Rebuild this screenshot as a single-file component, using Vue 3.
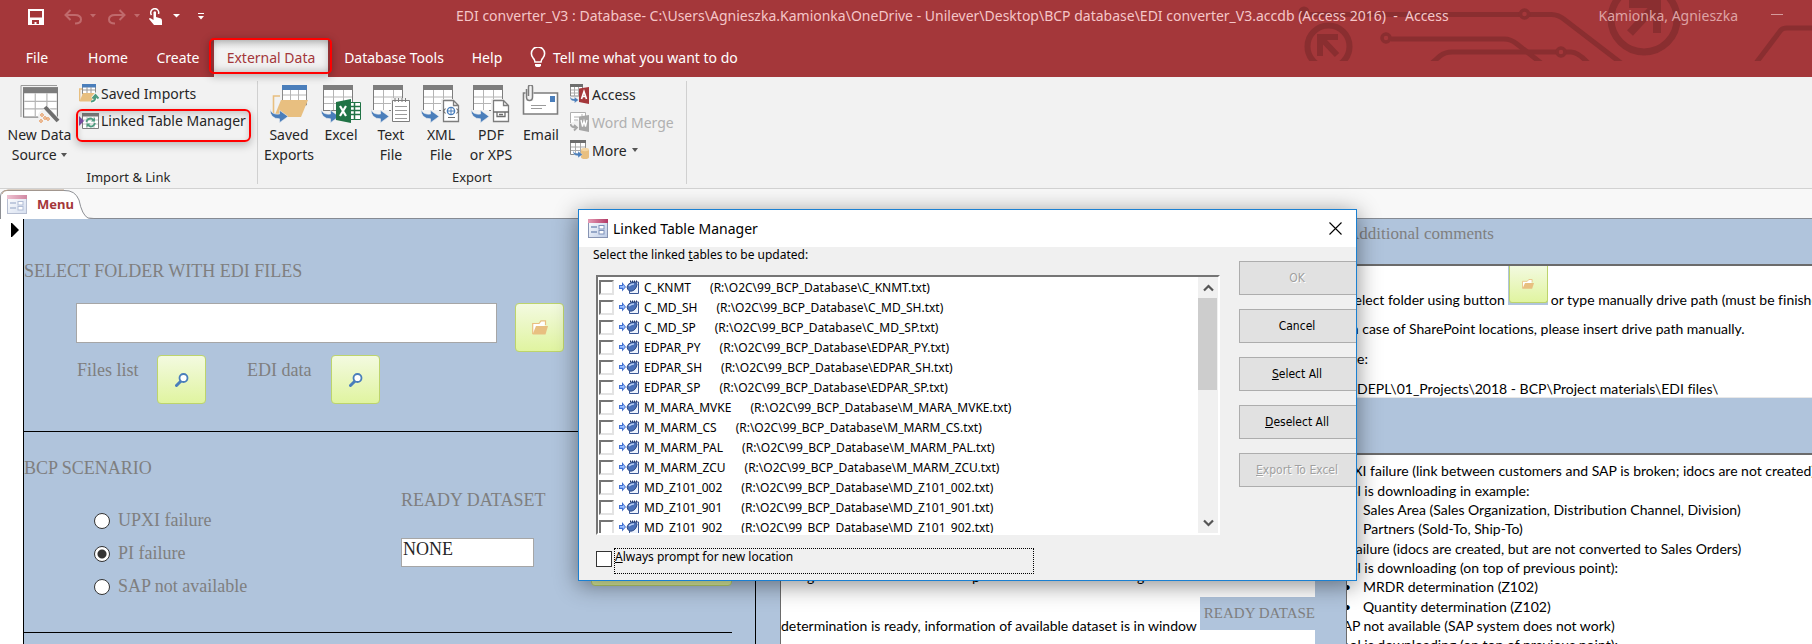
<script setup>
import { ref } from 'vue'

const ribbonTabs = [
  { label: 'Home', cls: 'w-home' },
  { label: 'Create', cls: 'w-create' },
  { label: 'External Data', cls: 'active' },
  { label: 'Database Tools', cls: 'w-tools' },
  { label: 'Help', cls: 'w-help' },
]

const exportButtons = [
  { icon: 'saved', lines: ['Saved', 'Exports'], wide: true },
  { icon: 'excel', lines: ['Excel'] },
  { icon: 'text', lines: ['Text', 'File'] },
  { icon: 'xml', lines: ['XML', 'File'] },
  { icon: 'pdf', lines: ['PDF', 'or XPS'] },
  { icon: 'email', lines: ['Email'] },
]

const tables = ref(
  [
    'C_KNMT', 'C_MD_SH', 'C_MD_SP', 'EDPAR_PY', 'EDPAR_SH', 'EDPAR_SP', 'M_MARA_MVKE',
    'M_MARM_CS', 'M_MARM_PAL', 'M_MARM_ZCU', 'MD_Z101_002', 'MD_Z101_901', 'MD_Z101_902',
  ].map((name) => ({ name, checked: false }))
)

const scenarios = ['UPXI failure', 'PI failure', 'SAP not available']
const scenario = ref('PI failure')
const folder = ref('')
const dataset = ref('NONE')
const alwaysPrompt = ref(false)

const notes = [
  { text: 'UPXI failure (link between customers and SAP is broken; idocs are not created)' },
  { text: 'Tool is downloading in example:' },
  { text: 'Sales Area (Sales Organization, Distribution Channel, Division)', item: true },
  { text: 'Partners (Sold-To, Ship-To)', item: true },
  { text: 'PI failure (idocs are created, but are not converted to Sales Orders)' },
  { text: 'Tool is downloading (on top of previous point):' },
  { text: 'MRDR determination (Z102)', item: true },
  { text: 'Quantity determination (Z102)', item: true },
  { text: 'SAP not available (SAP system does not work)' },
  { text: 'Tool is downloading (on top of previous point):' },
]
</script>

<template>
  <div class="app">
    <svg class="defs" aria-hidden="true">
      <symbol id="grid" viewBox="0 0 30 26">
        <rect x="0.5" y="0.5" width="29" height="25" fill="#fff" stroke="#7d7d7d" />
        <path d="M0 0H30V5H0Z" fill="#7d7d7d" />
        <path d="M10.500 5V25M20.500 5V25M1 12H29M1 18.500H29" stroke="#b5b5b5" fill="none" />
      </symbol>
      <symbol id="swoosh" viewBox="0 0 20 15">
        <path d="M0 1Q2 7 10 6V2L19 8.500L10 15V11Q0 11 0 1Z" fill="#4a7ebb" stroke="#f2f2f2" stroke-width="0.6" />
      </symbol>
      <symbol id="folder" viewBox="0 0 16 15">
        <path d="M0.700 14V3.500H7L9 0.800H13.500V5" fill="#fff" stroke="#e8bf80" stroke-width="1.200" />
        <path d="M4 6H16L13.500 14.500H0.500Z" fill="#e8bf80" />
      </symbol>
      <symbol id="lens" viewBox="0 0 14 14">
        <path d="M6 8L1.500 12.500" stroke="#4a7ebb" stroke-width="3" stroke-linecap="round" />
        <circle cx="8.500" cy="5" r="4" fill="#fff" stroke="#4a7ebb" stroke-width="1.800" />
      </symbol>
      <symbol id="form" viewBox="0 0 20 19">
        <linearGradient id="fbg" x1="0" y1="0" x2="1" y2="1">
          <stop offset="0" stop-color="#fff" /><stop offset="1" stop-color="#bccbe6" />
        </linearGradient>
        <linearGradient id="fhd" x1="0" y1="0" x2="1" y2="0">
          <stop offset="0" stop-color="#e59ab4" /><stop offset="1" stop-color="#b23a66" />
        </linearGradient>
        <rect x="0.500" y="0.500" width="19" height="18" fill="url(#fbg)" stroke="#8794b3" />
        <rect width="20" height="4" fill="url(#fhd)" />
        <path d="M3 8H9M3 13H9" stroke="#7e92bb" stroke-width="1.300" />
        <rect x="11" y="6.500" width="5" height="3.500" fill="#fff" stroke="#7e92bb" />
        <rect x="11" y="11.500" width="5" height="3.500" fill="#fff" stroke="#7e92bb" />
      </symbol>
      <symbol id="linked" viewBox="0 0 20 14">
        <path d="M0 5H3V2L7 7L3 11.500V9H0Z" fill="#3f6fd0" />
        <path d="M1 6H4V4.500L6 7L4 9V7.800H1Z" fill="#9dc0ff" />
        <path d="M12 2H19.500V13.500H10.500V10" fill="#eef3fc" stroke="#3a5795" />
        <path d="M11 1.500H18" stroke="#22376b" stroke-width="2" stroke-dasharray="1 1" />
        <path d="M8 7Q9 3 13 2.500Q18 2 18 4.500Q17 10 13 11Q9 12 8 7Z" fill="#4a70b8" stroke="#2b4784" />
        <path d="M10 6Q12 3.800 15 4" stroke="#b5cdf4" stroke-width="1.500" fill="none" />
      </symbol>
    </svg>

    <header class="banner">
      <svg class="circuit" width="552" height="61" viewBox="0 0 552 61" fill="none" stroke="#8a2e30" stroke-width="5" aria-hidden="true">
        <circle cx="44" cy="12" r="3" fill="#8a2e30" />
        <path d="M48 14.500H260M269 14.500H290Q298 14 305 20L361 63" />
        <circle cx="264.500" cy="14" r="4" stroke-width="3.500" />
        <circle cx="68.500" cy="46.500" r="21" stroke-width="6" />
        <path d="M60 56V37H78M61 38L77 55" stroke-width="6" />
        <circle cx="126" cy="38" r="4" stroke-width="3.500" />
        <path d="M131 39H244Q251 39 257 44L281 63" />
        <path d="M172 63L180 56Q185 52 192 52H296M306 52H311Q318 52 328 63" />
        <circle cx="301" cy="52" r="4" stroke-width="3.500" />
        <circle cx="384" cy="19" r="33" stroke-width="7" />
        <path d="M369 4H397V33M395 6L370 33" stroke-width="8" />
        <path d="M496 63L521 30Q523 28 527 28H552" />
      </svg>

      <div class="title-row">
        <div class="quick">
          <button class="qb save" aria-label="Save">
            <svg width="16" height="16" viewBox="0 0 16 16"><path d="M0 0H16V16H0Z" fill="#fff" /><path d="M2 2H14V8.500H2Z" fill="#a4373a" /><path d="M4 11H11V15H8.500V13H6.500V15H4Z" fill="#a4373a" /></svg>
          </button>
          <button class="qb undo" aria-label="Undo">
            <svg width="33" height="16" viewBox="0 0 33 16" fill="none" stroke="#c06a6c" stroke-width="2"><path d="M1.500 6H11Q17 6 17 10.500Q17 14.500 11 14.500M6.500 1L1.500 6L6.500 11" /><path d="M26 5H32L29 8.500Z" fill="#c06a6c" stroke="none" /></svg>
          </button>
          <button class="qb redo" aria-label="Redo">
            <svg width="33" height="16" viewBox="0 0 33 16" fill="none" stroke="#c06a6c" stroke-width="2"><path d="M16.500 6H7Q1 6 1 10.500Q1 14.500 7 14.500M11.500 1L16.500 6L11.500 11" /><path d="M26 5H32L29 8.500Z" fill="#c06a6c" stroke="none" /></svg>
          </button>
          <button class="qb touch" aria-label="Touch or mouse mode">
            <svg width="31" height="18" viewBox="0 0 31 18" fill="none"><path d="M2.500 7A4 4 0 1 1 9.500 6" stroke="#fff" stroke-width="1.500" /><path d="M4.500 4Q6 2.500 7 4V9L12 10.500Q13 11 13 13V17H5L0 11Q0.500 9.500 2 10.500L4.500 12Z" fill="#fff" /><path d="M24 6H31L27.500 9.500Z" fill="#fff" /></svg>
          </button>
          <button class="qb more" aria-label="Customize Quick Access Toolbar">
            <svg width="6" height="8" viewBox="0 0 6 8"><path d="M0 0.500H6" stroke="#fff" /><path d="M0 3H6L3 6.500Z" fill="#fff" /></svg>
          </button>
        </div>
        <h1 class="title">EDI converter_V3 : Database- C:\Users\Agnieszka.Kamionka\OneDrive - Unilever\Desktop\BCP database\EDI converter_V3.accdb (Access 2016) &nbsp;-&nbsp; Access</h1>
        <span class="user">Kamionka, Agnieszka</span>
        <button class="qb minimize" aria-label="Minimize"><svg width="12" height="2"><path d="M0 0.500H12" stroke="#d59a9b" /></svg></button>
      </div>

      <nav class="tabs">
        <button class="tab w-file">File</button>
        <button v-for="t in ribbonTabs" :key="t.label" class="tab" :class="t.cls">{{ t.label }}</button>
        <button class="tab tell">
          <svg width="16" height="21" viewBox="0 0 16 21" fill="none" stroke="#fff" stroke-width="1.600"><path d="M5 15Q5 12.500 3 10.800A6.600 6.600 0 1 1 13 10.800Q11 12.500 11 15Z" /><path d="M5 17H11V19L9.500 20H6.500L5 19Z" fill="#fff" stroke="none" /></svg>
          Tell me what you want to do
        </button>
      </nav>
    </header>

    <section class="ribbon" aria-label="External Data">
      <div class="group import">
        <div class="tools">
          <button class="big source">
            <svg width="40" height="39" viewBox="0 0 40 39">
              <path d="M1 32V0.500H37" stroke="#9a9a9a" fill="none" />
              <use href="#grid" x="3" y="2" width="35" height="31" />
              <path d="M25 23L37 36" stroke="#f2f2f2" stroke-width="7" />
              <circle cx="24" cy="31" r="6" fill="#f2f2f2" /><path d="M25 22L38 36" stroke="#6e6e6e" stroke-width="4" />
              <g fill="none" stroke="#e8914f"><circle cx="22" cy="30" r="1.300" /><circle cx="21" cy="36" r="1.300" /><circle cx="28" cy="34" r="1.300" /><circle cx="25" cy="33" r="1.300" /></g>
            </svg>
            <span>New Data</span><span>Source <i class="caret"></i></span>
          </button>
          <div class="stack">
            <button class="small">
              <svg width="20" height="19" viewBox="0 0 20 19"><path d="M0.700 17V5H4" fill="none" stroke="#e8bf80" stroke-width="1.400" /><path d="M3.500 0.500H16.500V10H3.500Z" fill="#fff" stroke="#8a8a8a" /><path d="M3 0H17V3.500H3Z" fill="#4a7ebb" /><path d="M8 3V9M12 3V9M4 6H16" stroke="#9a9a9a" /><path d="M4 9H17L12 17.500H0.500Z" fill="#e8bf80" /><path d="M12 18Q17 18 16.500 12M13.500 14.500L16.500 11L19.500 14.500" fill="none" stroke="#fff" stroke-width="3.500" /><path d="M12 17.500Q16.500 17.500 16.500 12M13.500 14.500L16.500 11L19.500 14.500" fill="none" stroke="#4e9b7f" stroke-width="2" /></svg>
              Saved Imports
            </button>
            <button class="small marked">
              <svg width="20" height="16" viewBox="0 0 20 16"><path d="M3.500 0.500H19.500V15.500H3.500Z" fill="#fff" stroke="#7d7d7d" /><path d="M3 0H20V3.500H3Z" fill="#7d7d7d" /><path d="M4 7H19M4 11H19M8 4V15M15 4V15" stroke="#c4c4c4" /><path d="M7.500 9Q8 5.500 12 5.500L15 7M16 10Q15 13.500 11.500 13.500L8.500 12" fill="none" stroke="#4e9b7f" stroke-width="1.800" /><path d="M16 4.500V8.500H12ZM7.500 14.500V10.500H11.500Z" fill="#4e9b7f" /><path d="M0 3L5 8L0 13Z" fill="#7a4da3" /></svg>
              Linked Table Manager
            </button>
          </div>
        </div>
        <div class="caption">Import &amp; Link</div>
      </div>

      <div class="group export">
        <div class="tools">
          <button v-for="b in exportButtons" :key="b.icon" class="big" :class="{ wide: b.wide }">
            <svg width="40" height="39" viewBox="0 0 40 39">
              <template v-if="b.icon === 'saved'">
                <path d="M4.500 30V11H11" fill="none" stroke="#e8bf80" stroke-width="1.600" />
                <path d="M13.500 0.500H37.500V20H13.500Z" fill="#fff" stroke="#8a8a8a" /><path d="M13 0H38V5H13Z" fill="#4a7ebb" /><path d="M21.500 5V16M29.500 5V16M14 10H37" stroke="#b5b5b5" />
                <path d="M12 15H39L32 32H5Z" fill="#e8bf80" />
                <use href="#swoosh" x="1" y="23" width="19" height="15" />
              </template>
              <template v-else-if="b.icon === 'email'">
                <path d="M2.500 8H36.500V29H2.500Z" fill="#fff" stroke="#7d7d7d" stroke-width="1.600" /><path d="M29 11H34V17H29Z" fill="#4a7ebb" /><path d="M10 20.500H25M10 23.500H21" stroke="#9a9a9a" /><path d="M4.500 4V16H12.500V4Z" fill="#f2f2f2" /><path d="M5.500 4V12A3 3.500 0 0 0 11.500 12V2A2 2 0 0 0 7.500 2V11" fill="none" stroke="#7d7d7d" stroke-width="1.500" />
              </template>
              <template v-else>
                <use href="#grid" x="2" y="0" width="30" height="26" />
                <path v-if="b.icon !== 'excel'" d="M18 25H1V27H18Z" fill="#f2f2f2" />
                <use href="#swoosh" x="0" y="23" width="19" height="15" />
                <g v-if="b.icon === 'excel'">
                  <path d="M28 17.500H39.500V34.500H28Z" fill="#fff" stroke="#217346" /><path d="M29 21.500H39M29 25.500H39M29 29.500H39M33.500 18V34" stroke="#217346" stroke-width="1.500" /><path d="M15 17L30 14V38L15 35Z" fill="#217346" /><path d="M19 21L25 31M25 21L19 31" stroke="#fff" stroke-width="2.200" />
                </g>
                <g v-else-if="b.icon === 'text'">
                  <path d="M20 13H39V38H20Z" fill="#f2f2f2" /><path d="M21.500 15.500H38.500V36.500H21.500Z" fill="#fff" stroke="#7d7d7d" /><path d="M24 13V17M27.500 13V17M31 13V17M34.500 13V17" stroke="#7d7d7d" /><path d="M24 21.500H36M24 25.500H36M24 29.500H36M24 33.500H36" stroke="#9a9a9a" />
                </g>
                <g v-else>
                  <path d="M20 14H40V38H20Z" fill="#f2f2f2" /><path d="M22.500 15.500H32.500L37.500 20.500V36.500H22.500ZM32.500 15.500V20.500H37.500" fill="#fff" stroke="#7d7d7d" stroke-width="1.300" />
                  <template v-if="b.icon === 'xml'"><circle cx="30" cy="26" r="3.600" fill="#fff" stroke="#4a7ebb" stroke-width="1.400" /><path d="M30 22V30M26.500 26H33.500" stroke="#4a7ebb" /><path d="M24.500 23.500L22.500 26L24.500 28.500M35.500 23.500L37.500 26L35.500 28.500M27 32.500H34" fill="none" stroke="#6e6e6e" stroke-width="1.200" /></template>
                  <path v-else d="M22 27H26V31.500H34V27H38M26 29V27H34V29M28 29.500H32" fill="none" stroke="#6e6e6e" stroke-width="1.300" />
                </g>
              </template>
            </svg>
            <span v-for="l in b.lines" :key="l">{{ l }}</span>
          </button>
          <div class="stack right">
            <button class="small">
              <svg width="20" height="20" viewBox="0 0 20 20"><path d="M0.500 0.500H12.500V12H0.500Z" fill="#fff" stroke="#8a8a8a" /><path d="M0 0H13V3H0Z" fill="#6e6e6e" /><path d="M4.500 3V12M8.500 3V12M1 6H12M1 9H12" stroke="#aaa" /><path d="M9 4.500L19 3V20L9 18Z" fill="#a4373a" /><path d="M11.500 15L14 7.500L16.500 15M12.500 12.500H15.500" fill="none" stroke="#fff" stroke-width="1.600" /><use href="#swoosh" x="0" y="12" width="9" height="7" /></svg>
              Access
            </button>
            <button class="small" disabled>
              <svg width="20" height="20" viewBox="0 0 20 20"><path d="M0.500 11V0.500H15.500V5" fill="#fff" stroke="#b0b0b0" /><path d="M4 5H9M4 8H8M11 3H13" stroke="#b0b0b0" /><path d="M9 4.500L19 3V20L9 18Z" fill="#a6a6a6" /><path d="M11 8L12.500 14.500L14 9L15.500 14.500L17 8" fill="none" stroke="#fff" stroke-width="1.300" /><path d="M0.500 12Q1 15.500 6 15.500M4 13L7 15.500L4 18.500" fill="none" stroke="#a6a6a6" stroke-width="1.800" /></svg>
              Word Merge
            </button>
            <button class="small">
              <svg width="20" height="20" viewBox="0 0 20 20"><path d="M0.500 0.500H15.500V14.500H0.500Z" fill="#fff" stroke="#8a8a8a" /><path d="M0 0H16V3H0Z" fill="#6e6e6e" /><path d="M5.500 3V14M10.500 3V14M1 7H15M1 10.500H15" stroke="#aaa" /><path d="M11 10H19V17Q19 19 15 19Q11 19 11 17Z" fill="#e8bf80" /><ellipse cx="15" cy="9.500" rx="4" ry="1.700" fill="#f3d6a5" /><use href="#swoosh" x="3" y="10" width="10" height="8" /></svg>
              More <i class="caret"></i>
            </button>
          </div>
        </div>
        <div class="caption">Export</div>
      </div>
    </section>

    <div class="doc-tabs">
      <svg class="tab-shape" width="94" height="30" viewBox="0 0 94 30" aria-hidden="true"><path d="M0.500 30V7Q1 1.500 7 1.500H64Q75 1 79 11Q82 26 88 29Q90 30 94 30Z" fill="#fff" /><path d="M0.500 30V7Q1 1.500 7 1.500H64Q75 1 79 11Q82 26 88 29L94 29.500" fill="none" stroke="#8d8f94" /><path d="M2 5Q3 1 8 1H64" fill="none" stroke="#b8a08a" /></svg>
      <button class="doc-tab"><svg class="faded" width="20" height="19"><use href="#form" /></svg>Menu</button>
    </div>

    <main class="form">
      <div class="selector"><svg width="8" height="14" viewBox="0 0 8 14"><path d="M0 0H1L8 7L1 14H0Z" fill="#000" /></svg></div>

      <div class="left">
        <section class="block folder-block">
          <h2><label for="folder">SELECT FOLDER WITH EDI FILES</label></h2>
          <div class="folder-row">
            <input id="folder" v-model="folder" type="text" />
            <button class="lime" aria-label="Choose folder"><svg width="16" height="15"><use href="#folder" /></svg></button>
          </div>
          <div class="lookup-row">
            <span>Files list</span>
            <button class="lime" aria-label="Show files list"><svg width="14" height="14"><use href="#lens" /></svg></button>
            <span>EDI data</span>
            <button class="lime" aria-label="Show EDI data"><svg width="14" height="14"><use href="#lens" /></svg></button>
          </div>
        </section>

        <section class="block scenario-block">
          <h2>BCP SCENARIO</h2>
          <div class="scenario-row">
            <div class="radios">
              <label v-for="s in scenarios" :key="s"><input v-model="scenario" type="radio" name="scenario" :value="s" />{{ s }}</label>
            </div>
            <div class="ready">
              <label for="dataset">READY DATASET</label>
              <input id="dataset" v-model="dataset" type="text" />
            </div>
            <button class="lime run" aria-label="Run"></button>
          </div>
        </section>
      </div>

      <div class="middle">
        <p class="tails"><span>g</span><span>p</span><span>g</span></p>
        <p class="info">determination is ready, information of available dataset is in window <span class="chip">READY DATASET</span></p>
      </div>

      <div class="side">
        <h3>Additional comments</h3>
        <div class="panel steps">
          <p class="first">Select folder using button <span class="thumb"><span class="lime mini"><svg width="12" height="10" viewBox="0 0 16 15" preserveAspectRatio="none"><use href="#folder" width="16" height="15" /></svg></span></span> or type manually drive path (must be finished</p>
          <p>In case of SharePoint locations, please insert drive path manually.</p>
          <p class="in">e:</p>
          <p class="in">DEPL\01_Projects\2018 - BCP\Project materials\EDI files\</p>
        </div>
        <div class="panel notes">
          <p v-for="(n, i) in notes" :key="i" :class="{ item: n.item }">{{ n.text }}</p>
        </div>
      </div>
    </main>

    <div class="dialog" role="dialog" aria-labelledby="dlg-title">
      <div class="dlg-bar">
        <svg width="20" height="19"><use href="#form" /></svg>
        <h2 id="dlg-title">Linked Table Manager</h2>
        <button class="close" aria-label="Close"><svg width="13" height="13" viewBox="0 0 13 13"><path d="M0.500 0.500L12.500 12.500M12.500 0.500L0.500 12.500" stroke="#000" stroke-width="1.100" /></svg></button>
      </div>
      <div class="dlg-body">
        <div class="dlg-main">
          <p class="prompt">Select the linked <u>t</u>ables to be updated:</p>
          <div class="list">
            <div class="rows">
              <label v-for="t in tables" :key="t.name" class="row">
                <input v-model="t.checked" type="checkbox" />
                <svg width="20" height="14"><use href="#linked" /></svg>
                <span>{{ t.name }}</span><span class="path">(R:\O2C\99_BCP_Database\{{ t.name }}.txt)</span>
              </label>
            </div>
            <div class="scroll">
              <button aria-label="Scroll up"><svg width="11" height="8" viewBox="0 0 11 8"><path d="M1 6.500L5.500 2L10 6.500" fill="none" stroke="#555" stroke-width="2.200" /></svg></button>
              <div class="grip"></div>
              <button aria-label="Scroll down"><svg width="11" height="8" viewBox="0 0 11 8"><path d="M1 1.500L5.500 6L10 1.500" fill="none" stroke="#555" stroke-width="2.200" /></svg></button>
            </div>
          </div>
          <label class="always"><input v-model="alwaysPrompt" type="checkbox" /><span><u>A</u>lways prompt for new location</span></label>
        </div>
        <div class="dlg-buttons">
          <button disabled>OK</button>
          <button>Cancel</button>
          <button><span><u>S</u>elect All</span></button>
          <button><span><u>D</u>eselect All</span></button>
          <button disabled><span><u>E</u>xport To Excel</span></button>
        </div>
      </div>
    </div>
  </div>
</template>

<style>
body { overflow: hidden; }
</style>

<style scoped>
.app { position: relative; display: flex; flex-direction: column; height: 100vh; overflow: hidden; background: #fff; font-family: "Noto Sans", "Open Sans", sans-serif; font-size: 14px; color: #262626; }
.app * { box-sizing: border-box; }
button { margin: 0; padding: 0; border: 0; background: none; font: inherit; color: inherit; white-space: nowrap; }
h1, h2, h3, p { margin: 0; font-weight: normal; font-size: inherit; }
svg { display: block; flex: none; }
.defs { position: absolute; width: 0; height: 0; }

/* title bar and ribbon tabs */
.banner { position: relative; flex: none; height: 77px; background: #a4373a; color: #fff; }
.circuit { position: absolute; top: 0; right: 0; }
.title-row { position: relative; display: flex; align-items: center; height: 30px; padding-right: 29px; }
.quick { display: flex; align-items: center; width: 456px; padding: 4px 0 0 28px; }
.undo { margin-left: 20px; }
.redo { margin-left: 11px; }
.touch { margin-left: 8px; }
.more { margin-left: 18px; }
.title { color: #f5c6c8; white-space: nowrap; }
.user { margin-left: auto; color: #dea3a5; white-space: nowrap; }
.minimize { margin-left: 33px; }
.tabs { position: relative; display: flex; height: 47px; padding: 9px 0 0 12px; }
.tab { display: flex; justify-content: center; align-items: center; height: 38px; padding-bottom: 2px; }
.w-file { width: 50px; }
.w-home { width: 92px; }
.w-create { width: 48px; margin-right: 12px; }
.active { width: 114px; background: linear-gradient(#d8d8d8, #f2f2f2 10px); color: #a4373a; position: relative; }
.active::after { content: ""; position: absolute; left: -5px; right: -4px; top: -1px; height: 32px; border: 2px solid #f00; border-radius: 5px; box-shadow: 0 2px 8px rgba(0,0,0,.3), inset 0 0 8px rgba(0,0,0,.3); }
.w-tools { width: 132px; }
.w-help { width: 54px; }
.tell { gap: 7px; margin-left: 16px; }

/* ribbon */
.ribbon { flex: none; display: flex; height: 112px; padding: 4px 0; background: #f2f2f2; border-bottom: 1px solid #d2d2d2; }
.group { height: 103px; display: flex; flex-direction: column; justify-content: space-between; border-right: 1px solid #d0d0d0; }
.import { width: 258px; }
.export { width: 429px; }
.tools { display: flex; }
.caption { text-align: center; font-size: 13px; line-height: 14px; }
.big { display: flex; flex-direction: column; align-items: center; width: 50px; padding-top: 4px; line-height: 20px; }
.big svg { margin-bottom: 1px; }
.source { width: 79px; }
.wide { width: 54px; margin-left: 4px; }
.caret { display: inline-block; margin-left: 1px; border: 3px solid transparent; border-top: 4px solid #555; border-bottom: 0; vertical-align: 3px; }
.stack { display: flex; flex-direction: column; align-items: flex-start; }
.small { display: flex; align-items: center; gap: 2px; height: 28px; padding-bottom: 2px; }
.small .caret { margin-left: 3px; }
.import .small { height: 27px; padding-bottom: 2px; }
.import .marked { position: relative; }
.marked::after { content: ""; position: absolute; left: -3px; right: -5px; top: 1px; height: 29px; border: 2px solid #f00; border-radius: 6px; box-shadow: 0 3px 8px rgba(0,0,0,.25), inset 0 3px 6px rgba(0,0,0,.18); }
.right { padding-left: 4px; }
.small:disabled { color: #b0b0b0; }

/* document tab strip */
.doc-tabs { position: relative; flex: none; height: 30px; background: #f8f8f8; border-bottom: 1px solid #868b93; }
.tab-shape { position: absolute; left: 0; top: 0; }
.doc-tab { position: relative; display: flex; align-items: center; gap: 10px; height: 30px; padding-left: 7px; font-size: 13px; font-weight: bold; color: #a4373a; }
.faded { opacity: .6; }

/* form */
.form { flex: 1; display: flex; min-height: 0; background: #b0c4dc; }
.selector { width: 23px; padding: 4px 0 0 11px; background: #fff; }
.left { width: 733px; border-left: 1px solid #000; border-right: 1px solid #000; font-family: "Liberation Serif", serif; font-size: 18px; line-height: 24px; color: #7f7f7f; }
.block { width: 708px; border-bottom: 1px solid #000; }
.folder-block { padding: 40px 0 27px; }
.folder-row { display: flex; gap: 18px; padding: 20px 0 3px 52px; }
.folder-row input { width: 421px; height: 40px; border: 1px solid #a6a6a6; background: #fff; }
.lime { display: flex; align-items: center; justify-content: center; width: 49px; height: 49px; border: 1px solid #bdd46c; border-radius: 4px; background: linear-gradient(#f3fae0, #e0f4a0); }
.lookup-row { display: flex; padding-left: 53px; }
.lookup-row span { width: 80px; padding-top: 3px; }
.lookup-row span + .lime + span { margin-left: 41px; width: 84px; }
.scenario-block { padding: 24px 0 29px; }
.scenario-row { display: flex; }
.radios { width: 377px; padding: 24px 0 0 70px; }
.radios label { display: flex; align-items: center; gap: 8px; height: 33px; padding-bottom: 2px; }
.radios input { appearance: none; width: 16px; height: 16px; margin: 3px 0 0; border: 1px solid #333; border-radius: 50%; background: #fff; }
.radios input:checked { background: radial-gradient(circle, #333 4px, #fff 5px); }
.ready { display: flex; flex-direction: column; width: 190px; padding-top: 8px; white-space: nowrap; }
.ready input { width: 133px; height: 29px; margin-top: 26px; padding: 0 1px 6px; border: 1px solid #a6a6a6; font: inherit; color: #262626; background: #fff; }
.run { width: 141px; height: 48px; margin-top: 58px; }

.middle, .panel { background: #fff; border-left: 1px solid #6b6b6b; overflow: hidden; font-family: Lato, Carlito, sans-serif; font-size: 14px; line-height: 20px; color: #000; white-space: nowrap; font-variant-ligatures: none; }
.middle { width: 535px; margin-left: 24px; padding-top: 348px; }
.tails { display: flex; gap: 100px; padding-left: 26px; }
.tails span { width: 65px; }
.info { display: flex; align-items: flex-end; gap: 3px; margin-top: 7px; }
.chip { padding: 0 4px; background: #b0c4dc; color: #7f7f7f; font: 15px/33px "Liberation Serif", serif; margin: 3px 0 6px; }
.side { flex: 1; min-width: 0; display: flex; flex-direction: column; margin-left: 31px; }
.side h3 { height: 45px; padding-left: 1px; font: 17px/30px "Liberation Serif", serif; color: #7f7f7f; }
.panel { border-top: 2px solid #6b6b6b; }
.steps { height: 134px; border-bottom: 1px solid #e8e8e8; margin-bottom: 55px; }
.steps p { line-height: 30px; }
.steps .in { padding-left: 10px; }
.steps .first { display: flex; align-items: flex-end; gap: 3px; line-height: 20px; height: 48px; padding-bottom: 4px; }
.thumb { align-self: flex-start; padding: 0 0 2px 1px; background: #b0c4dc; }
.mini { width: 39px; height: 37px; border-top: 0; border-radius: 0 0 3px 3px; }
.notes { flex: 1; min-height: 0; padding-top: 6px; }
.notes p { line-height: 19px; margin-left: -12px; }
.notes p:nth-child(3n+1) { padding-bottom: 1px; }
.notes .item { padding-left: 28px; }
.notes .item::before { content: "•"; float: left; margin-left: -20px; }

/* dialog window */
.dialog { position: absolute; left: 578px; top: 209px; width: 779px; background: #f0f0f0; border: 1px solid #1a80d2; box-shadow: 0 4px 22px rgba(0,0,0,.45); color: #000; }
.dlg-bar { display: flex; align-items: center; gap: 5px; height: 37px; padding: 0 14px 0 9px; background: #fff; }
.close { margin-left: auto; }
.dlg-body { display: flex; justify-content: space-between; font-family: "DejaVu Sans Condensed", "DejaVu Sans", sans-serif; font-size: 12px; }
.dlg-main { padding: 0 0 6px 14px; }
.prompt { font-family: "Noto Sans", sans-serif; font-size: 12px; line-height: 15px; }
.list { display: flex; width: 624px; height: 260px; margin: 13px 0 13px 3px; border: 2px solid #fff; border-top-color: #757575; border-left-color: #757575; background: #fff; overflow: hidden; }
.rows { flex: 1; padding-left: 1px; font-family: "Noto Sans", "Open Sans", sans-serif; font-size: 12px; }
.row { display: flex; align-items: center; height: 20px; white-space: pre; }
.row input { appearance: none; width: 15px; height: 15px; margin: 0 5px 0 0; border: 2px solid #e3e3e3; border-top-color: #757575; border-left-color: #757575; background: #fff; }
.row svg { margin-right: 5px; }
.path { margin-left: 19px; }
.scroll { display: flex; flex-direction: column; width: 20px; background: #f0f0f0; }
.scroll button { display: flex; align-items: center; justify-content: center; height: 21px; }
.grip { height: 92px; margin-bottom: auto; margin-right: 1px; background: #cdcdcd; }
.always { display: flex; align-items: center; gap: 2px; padding-left: 3px; font-family: "Noto Sans", sans-serif; }
.always input { appearance: none; width: 16px; height: 16px; margin: 0 0 5px; border: 1px solid #333; background: #fff; }
.always span { width: 420px; height: 26px; border: 1px dotted #000; line-height: 15px; }
.dlg-buttons { display: flex; flex-direction: column; gap: 14px; width: 117px; padding-top: 14px; }
.dlg-buttons button { height: 34px; padding-right: 2px; border: 1px solid #adadad; border-right: 0; background: #e1e1e1; }
.dlg-buttons button:disabled { color: #a0a0a0; text-shadow: 1px 1px 0 #fff; }
</style>
